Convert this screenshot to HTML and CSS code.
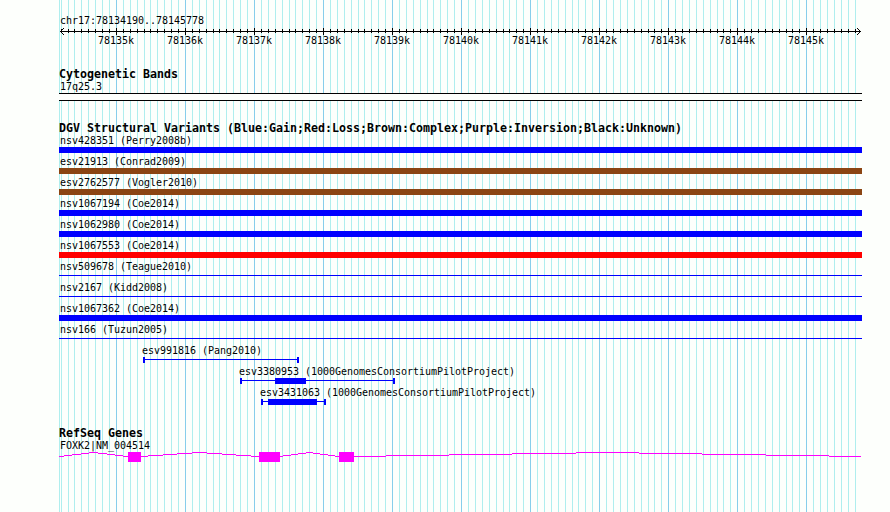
FILE: index.html
```html
<!DOCTYPE html>
<html lang="en">
<head>
    <meta charset="UTF-8">
    <title>chr17:78134190..78145778</title>
    <link rel="stylesheet" href="styles.css">
</head>
<body>
    <div class="browser">
        <svg class="grid" width="803" height="512" shape-rendering="crispEdges">
            <path class="minor" id="gridMinor"/>
            <path class="major" id="gridMajor"/>
        </svg>

        <div class="location">chr17:78134190..78145778</div>
        <div class="ruler">
            <svg class="axis" width="803" height="7" shape-rendering="crispEdges">
                <path class="ink" d="M1 3h801v1h-801z"/>
                <path class="ink" d="M2 2h1v1h-1zM3 1h1v1h-1zM4 0h1v1h-1zM2 4h1v1h-1zM3 5h1v1h-1zM4 6h1v1h-1z"/>
                <path class="ink" d="M800 2h1v1h-1zM799 1h1v1h-1zM798 0h1v1h-1zM800 4h1v1h-1zM799 5h1v1h-1zM798 6h1v1h-1z"/>
                <path class="ink" id="ticks"/>
            </svg>
            <div class="ticks">
                <span>78135k</span><span>78136k</span><span>78137k</span><span>78138k</span><span>78139k</span><span>78140k</span><span>78141k</span><span>78142k</span><span>78143k</span><span>78144k</span><span>78145k</span>
            </div>
        </div>

        <div class="track cyto">
            <h2>Cytogenetic Bands</h2>
            <div class="label">17q25.3</div>
            <div class="band"></div>
        </div>

        <div class="track variants">
            <h2>DGV Structural Variants (Blue:Gain;Red:Loss;Brown:Complex;Purple:Inversion;Black:Unknown)</h2>
            <div class="row"><div class="label">nsv428351 (Perry2008b)</div><div class="bar gain"></div></div>
            <div class="row"><div class="label">esv21913 (Conrad2009)</div><div class="bar complex"></div></div>
            <div class="row"><div class="label">esv2762577 (Vogler2010)</div><div class="bar complex"></div></div>
            <div class="row"><div class="label">nsv1067194 (Coe2014)</div><div class="bar gain"></div></div>
            <div class="row"><div class="label">nsv1062980 (Coe2014)</div><div class="bar gain"></div></div>
            <div class="row"><div class="label">nsv1067553 (Coe2014)</div><div class="bar loss"></div></div>
            <div class="row"><div class="label">nsv509678 (Teague2010)</div><div class="bar thin"></div></div>
            <div class="row"><div class="label">nsv2167 (Kidd2008)</div><div class="bar thin"></div></div>
            <div class="row"><div class="label">nsv1067362 (Coe2014)</div><div class="bar gain"></div></div>
            <div class="row"><div class="label">nsv166 (Tuzun2005)</div><div class="bar thin"></div></div>
            <div class="row range esv991816">
                <div class="label">esv991816 (Pang2010)</div>
                <svg width="156" height="6" shape-rendering="crispEdges"><path class="blue" d="M0 0h2v6h-2zM0 2h156v1h-156zM154 0h2v6h-2z"/></svg>
            </div>
            <div class="row range esv3380953">
                <div class="label">esv3380953 (1000GenomesConsortiumPilotProject)</div>
                <svg width="155" height="6" shape-rendering="crispEdges"><path class="blue" d="M0 0h2v6h-2zM0 2h155v1h-155zM35 0h31v6h-31zM153 0h2v6h-2z"/></svg>
            </div>
            <div class="row range esv3431063">
                <div class="label">esv3431063 (1000GenomesConsortiumPilotProject)</div>
                <svg width="65" height="6" shape-rendering="crispEdges"><path class="blue" d="M0 0h2v6h-2zM0 2h65v1h-65zM7 0h49v6h-49zM63 0h2v6h-2z"/></svg>
            </div>
        </div>

        <div class="track genes">
            <h2>RefSeq Genes</h2>
            <div class="label">FOXK2|NM_004514</div>
            <svg width="803" height="10" shape-rendering="crispEdges">
                <!-- introns -->
                <path class="pink" d="M0 4h5v1h-5zM5 3h8v1h-8zM13 2h9v1h-9zM22 1h8v1h-8zM30 0h9v1h-9zM39 1h9v1h-9zM48 2h8v1h-8zM56 3h8v1h-8zM64 4h5v1h-5z"/>
                <path class="pink" d="M82 4h7v1h-7zM89 3h15v1h-15zM104 2h14v1h-14zM118 1h15v1h-15zM133 0h15v1h-15zM148 1h15v1h-15zM163 2h14v1h-14zM177 3h15v1h-15zM192 4h8v1h-8z"/>
                <path class="pink" d="M221 4h3v1h-3zM224 3h8v1h-8zM232 2h7v1h-7zM239 1h8v1h-8zM247 0h7v1h-7zM254 1h7v1h-7zM261 2h8v1h-8zM269 3h7v1h-7zM276 4h4v1h-4z"/>
                <path class="pink" d="M295 4h32v1h-32zM327 3h63v1h-63zM390 2h63v1h-63zM453 1h64v1h-64zM517 0h63v1h-63zM580 1h63v1h-63zM643 2h64v1h-64zM707 3h63v1h-63zM770 4h32v1h-32z"/>
                <!-- exons -->
                <path class="pink" d="M69 0h13v10h-13zM200 0h21v10h-21zM280 0h15v10h-15z"/>
            </svg>
        </div>
    </div>

    <script>
        const start = 78134190;
        const end = 78145778;
        const scale = 800 / (end - start);

        let minor = 'M0 0h1v512h-1z';
        let major = '';
        let ticks = '';

        // one line per 100 bp, a stronger one per 1000 bp
        for (let bp = 78134200; bp < end - 50; bp += 100) {
            const x = 1 + Math.round((bp - start) * scale);
            if (bp % 1000 === 0) {
                major += `M${x} 0h1v512h-1z`;
                ticks += `M${x} 0h1v7h-1z`;
            } else {
                minor += `M${x} 0h1v512h-1z`;
                ticks += `M${x} 1h1v4h-1z`;
            }
        }

        document.getElementById('gridMinor').setAttribute('d', minor);
        document.getElementById('gridMajor').setAttribute('d', major);
        document.getElementById('ticks').setAttribute('d', ticks);
    </script>
</body>
</html>
```
FILE: styles.css
```css
body {
    margin: 0;
    background: #fdfffc;
    color: #000;
}
.browser {
    position: relative;
    z-index: 0;
    box-sizing: border-box;
    width: 803px;
    height: 512px;
    margin-left: 59px;
    padding-top: 15px;
    overflow: hidden;
    font-family: "DejaVu Sans Mono", monospace;
    font-size: 10px;
    line-height: 12px;
    letter-spacing: -0.02px;
}
.grid {
    position: absolute;
    top: 0;
    left: 0;
    z-index: -1;
}
.minor {
    fill: #afeeee;
}
.major {
    fill: #87ceeb;
}
.location, .label {
    padding-left: 1px;
    white-space: nowrap;
}
.axis {
    display: block;
}
.ruler {
    padding-top: 1px;
}
.ticks {
    display: flex;
    padding-left: 22px;
}
.ticks span {
    flex: none;
    width: 69px;
    text-indent: 17px;
}
h2 {
    margin: 0;
    font-size: 11.63px;
    line-height: 13px;
    letter-spacing: 0;
    white-space: nowrap;
}
.ink {
    fill: #000;
}
.blue {
    fill: #00f;
}
.pink {
    fill: #f0f;
}
.cyto {
    padding-top: 21px;
}
.band {
    height: 6px;
    border: solid #000;
    border-width: 1px 0;
    background: #fdfffc;
}
.variants {
    padding-top: 21px;
}
.row {
    height: 21px;
}
.bar {
    height: 6px;
}
.gain {
    background: #00f;
}
.loss {
    background: #f00;
}
.complex {
    background: #8b4513;
}
.thin {
    height: 1px;
    margin-top: 2px;
    background: #00f;
}
.range .label {
    margin-left: -1px;
    padding-left: 0;
}
.esv991816 {
    padding-left: 84px;
}
.esv3380953 {
    padding-left: 181px;
}
.esv3431063 {
    padding-left: 202px;
}
.genes {
    padding-top: 19px;
}
.row svg, .genes svg {
    display: block;
}
```
